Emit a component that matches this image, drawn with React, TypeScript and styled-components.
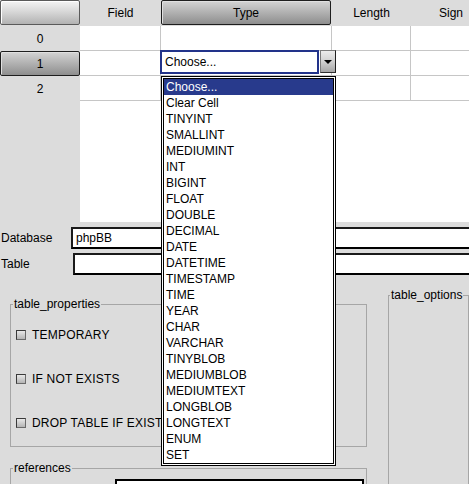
import React from "react";
import styled, { createGlobalStyle, css } from "styled-components";

const Global = createGlobalStyle`
  html, body {
    margin: 0;
    padding: 0;
    background: #dcdcdc;
    overflow: hidden;
  }
  body {
    font-family: "Liberation Sans", Arial, sans-serif;
    font-size: 12px;
    color: #000;
  }
`;

const Page = styled.div`
  width: 469px;
  height: 484px;
  overflow: hidden;
  position: relative;
`;

const cols = "80px 81px 171px 79px 80px";

const Grid = styled.div`
  display: flex;
  flex-direction: column;
  width: 491px;
`;

const HeaderRow = styled.div`
  display: grid;
  grid-template-columns: ${cols};
  height: 26px;
`;

const buttonLook = (selected: boolean) => css`
  box-sizing: border-box;
  border: 1px solid ${selected ? "#1e1e1e" : "#5a5a5a"};
  border-radius: 2px;
  background: ${selected
    ? "linear-gradient(#d4d4d4, #b4b4b4 45%, #8e8e8e)"
    : "linear-gradient(#f4f4f4, #d8d8d8 45%, #b2b2b2)"};
  box-shadow: inset 1px 1px 0 ${selected ? "#e0e0e0" : "#ffffff"};
`;

const HeadButton = styled.div<{ $selected?: boolean; $w: number }>`
  ${(p) => buttonLook(!!p.$selected)}
  width: ${(p) => p.$w}px;
  height: 25px;
  display: flex;
  align-items: center;
  justify-content: center;
`;

const HeadCell = styled.div`
  display: flex;
  align-items: center;
  justify-content: center;
  height: 25px;
`;

const BodyRow = styled.div`
  display: grid;
  grid-template-columns: ${cols};
  height: 25px;
`;

const RowHead = styled.div`
  display: flex;
  align-items: center;
  justify-content: center;
  height: 25px;
`;

const RowButton = styled.div`
  ${buttonLook(true)}
  width: 80px;
  height: 25px;
  display: flex;
  align-items: center;
  justify-content: center;
`;

const Cell = styled.div<{ $overlay?: boolean }>`
  box-sizing: border-box;
  background: #fff;
  border-right: 1px solid #c6c6c6;
  border-bottom: 1px solid #c6c6c6;
  height: 25px;
  position: ${(p) => (p.$overlay ? "relative" : "static")};
  z-index: ${(p) => (p.$overlay ? 5 : "auto")};
`;

const Filler = styled.div`
  display: grid;
  grid-template-columns: 80px 1fr;
  height: 121px;
`;

const FillerWhite = styled.div`
  background: #fff;
`;

const Combo = styled.div`
  position: absolute;
  top: -1px;
  left: -1px;
  width: 159px;
  height: 24px;
  box-sizing: border-box;
  border: 2px solid #22338a;
  background: #fff;
  padding-left: 3px;
  display: flex;
  align-items: center;
`;

const ComboArrow = styled.div`
  position: absolute;
  top: -1px;
  left: 159px;
  width: 16px;
  height: 23px;
  box-sizing: border-box;
  border: 1px solid #7a7a7a;
  border-right-color: #202020;
  border-bottom-color: #303030;
  background: linear-gradient(#ececec, #d0d0d0 50%, #a6a6a6);
  display: flex;
  align-items: center;
  justify-content: center;
  &::after {
    content: "";
    border-left: 4px solid transparent;
    border-right: 4px solid transparent;
    border-top: 4px solid #000;
  }
`;

const Popup = styled.ul`
  position: absolute;
  top: 25px;
  left: 0;
  width: 175px;
  height: 390px;
  box-sizing: border-box;
  margin: 0;
  padding: 0;
  list-style: none;
  border: 3px double #000;
  background: #fff;
  z-index: 10;
`;

const Item = styled.li<{ $active?: boolean }>`
  height: 16px;
  line-height: 16px;
  padding-left: 2px;
  white-space: nowrap;
  background: ${(p) => (p.$active ? "#283a8c" : "transparent")};
  color: ${(p) => (p.$active ? "#fff" : "#000")};
`;

const FormRow = styled.div<{ $top: number; $inputLeft: number }>`
  display: grid;
  grid-template-columns: ${(p) => p.$inputLeft}px 1fr;
  align-items: center;
  margin-top: ${(p) => p.$top}px;
  height: 22px;
`;

const Label = styled.span`
  padding-left: 1px;
`;

const TextInput = styled.div`
  box-sizing: border-box;
  height: 22px;
  width: 420px;
  border: 2px solid #000;
  border-top-color: #1a1a1a;
  border-left-color: #1a1a1a;
  background: #fff;
  padding-left: 3px;
  display: flex;
  align-items: center;
`;

const Groups = styled.div`
  display: flex;
  align-items: flex-start;
  margin-top: 13px;
`;

const LeftCol = styled.div`
  display: flex;
  flex-direction: column;
  margin-left: 10px;
  padding-top: 9px;
`;

const Fieldset = styled.fieldset<{ $w: number; $h?: number }>`
  box-sizing: border-box;
  margin: 0;
  padding: 0;
  min-width: 0;
  width: ${(p) => p.$w}px;
  ${(p) => (p.$h ? `height: ${p.$h}px;` : "")}
  border: 1px solid #a6a6a6;
`;

const Legend = styled.legend<{ $ml: number }>`
  padding: 0 1px;
  margin-left: ${(p) => p.$ml}px;
  font-size: 12px;
  line-height: 14px;
`;

const CheckList = styled.div`
  display: flex;
  flex-direction: column;
  gap: 24px;
  padding: 14px 0 13px 5px;
`;

const CheckRow = styled.label`
  display: flex;
  align-items: center;
  gap: 6px;
  height: 20px;
  white-space: nowrap;
  letter-spacing: 0.2px;
`;

const Box = styled.span`
  box-sizing: border-box;
  width: 10px;
  height: 10px;
  border: 1px solid #3a3a3a;
  border-bottom-color: #6a6a6a;
  border-right-color: #6a6a6a;
  background: linear-gradient(#e8e8e8, #b4b4b4);
`;

const RefsSet = styled(Fieldset)`
  margin-top: 14px;
`;

const RefBox = styled.div`
  box-sizing: border-box;
  margin: 4px 0 0 104px;
  width: 249px;
  height: 30px;
  border: 2px solid #000;
  background: #fff;
`;

const OptionsSet = styled(Fieldset)`
  margin-left: 21px;
`;

const types = [
  "Choose...",
  "Clear Cell",
  "TINYINT",
  "SMALLINT",
  "MEDIUMINT",
  "INT",
  "BIGINT",
  "FLOAT",
  "DOUBLE",
  "DECIMAL",
  "DATE",
  "DATETIME",
  "TIMESTAMP",
  "TIME",
  "YEAR",
  "CHAR",
  "VARCHAR",
  "TINYBLOB",
  "MEDIUMBLOB",
  "MEDIUMTEXT",
  "LONGBLOB",
  "LONGTEXT",
  "ENUM",
  "SET",
];

export default function App() {
  return (
    <Page>
      <Global />
      <Grid>
        <HeaderRow>
          <HeadButton $w={80} />
          <HeadCell>Field</HeadCell>
          <HeadButton $w={170} $selected>
            Type
          </HeadButton>
          <HeadCell>Length</HeadCell>
          <HeadCell>Sign</HeadCell>
        </HeaderRow>
        {[0, 1, 2].map((r) => (
          <BodyRow key={r}>
            <RowHead>{r === 1 ? <RowButton>1</RowButton> : r}</RowHead>
            <Cell />
            <Cell $overlay={r === 1}>
              {r === 1 && (
                <>
                  <Combo>Choose...</Combo>
                  <ComboArrow />
                  <Popup>
                    {types.map((t, i) => (
                      <Item key={t} $active={i === 0}>
                        {t}
                      </Item>
                    ))}
                  </Popup>
                </>
              )}
            </Cell>
            <Cell />
            <Cell />
          </BodyRow>
        ))}
        <Filler>
          <div />
          <FillerWhite />
        </Filler>
      </Grid>
      <FormRow $top={5} $inputLeft={71}>
        <Label>Database</Label>
        <TextInput>phpBB</TextInput>
      </FormRow>
      <FormRow $top={4} $inputLeft={73}>
        <Label>Table</Label>
        <TextInput />
      </FormRow>
      <Groups>
        <LeftCol>
          <Fieldset $w={357}>
            <Legend $ml={2}>table_properties</Legend>
            <CheckList>
              <CheckRow>
                <Box />
                TEMPORARY
              </CheckRow>
              <CheckRow>
                <Box />
                IF NOT EXISTS
              </CheckRow>
              <CheckRow>
                <Box />
                DROP TABLE IF EXISTS
              </CheckRow>
            </CheckList>
          </Fieldset>
          <RefsSet $w={357}>
            <Legend $ml={2}>references</Legend>
            <RefBox />
          </RefsSet>
        </LeftCol>
        <OptionsSet $w={120} $h={300}>
          <Legend $ml={1}>table_options</Legend>
        </OptionsSet>
      </Groups>
    </Page>
  );
}
